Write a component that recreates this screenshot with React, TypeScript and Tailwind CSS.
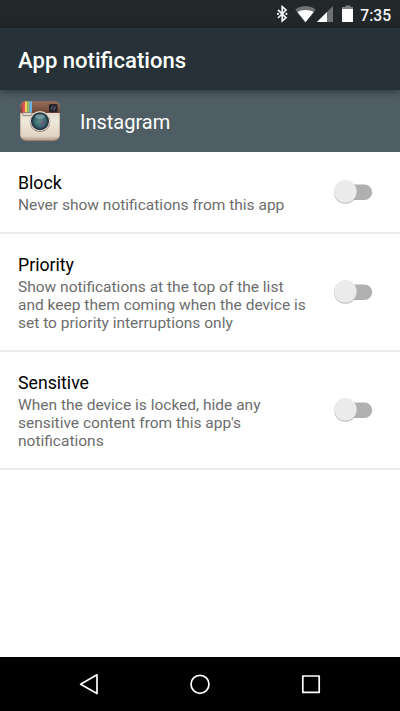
import React from "react";

const settings = [
  {
    title: "Block",
    lines: ["Never show notifications from this app"],
    height: "h-[82px]",
  },
  {
    title: "Priority",
    lines: [
      "Show notifications at the top of the list",
      "and keep them coming when the device is",
      "set to priority interruptions only",
    ],
    height: "h-[118px]",
  },
  {
    title: "Sensitive",
    lines: [
      "When the device is locked, hide any",
      "sensitive content from this app's",
      "notifications",
    ],
    height: "h-[118px]",
  },
];

function StatusBar() {
  return (
    <div className="flex h-7 items-center justify-end bg-[#22272a] pr-[9px]">
      {/* Bluetooth, wifi, signal, battery */}
      <svg width="78" height="28" viewBox="0 0 78 28" className="mr-[6px]">
        <path d="M2 9.8L10 17.8L6.2 21V6.6L10 10L2 18" fill="none" stroke="#f4f6f6" strokeWidth="1.7" />
        <circle cx="2" cy="13.9" r="1.1" fill="#f4f6f6" />
        <circle cx="10.4" cy="13.9" r="1.1" fill="#f4f6f6" />
        <path d="M19.3 9.6C24.8 4.9 34.2 4.9 39.7 9.6L29.5 22.3Z" fill="#6d7173" />
        <path d="M21.3 12.1C25.6 9.4 33.4 9.4 37.7 12.1L29.5 22.3Z" fill="#fff" />
        <path d="M57 6V22H41Z" fill="#6d7173" />
        <path d="M51 12V22H41Z" fill="#fff" />
        <path d="M69.5 5.6H74.5V7H77V10H66V7H69.5Z" fill="#7d8183" />
        <path d="M66 9H77V21.4Q77 22 76.4 22H66.6Q66 22 66 21.4Z" fill="#fff" />
      </svg>
      <span className="pt-[3px] text-[15.6px] leading-7 font-medium text-[#f4f6f6]">7:35</span>
    </div>
  );
}

function InstagramIcon() {
  return (
    <svg width="40" height="40" viewBox="0 0 40 40">
      <defs>
        <clipPath id="iconShape">
          <rect width="40" height="40" rx="6.5" />
        </clipPath>
        <linearGradient id="cream" x1="0" y1="0" x2="0" y2="1">
          <stop offset="0" stopColor="#d2c3b3" />
          <stop offset="0.5" stopColor="#efe8dd" />
          <stop offset="0.88" stopColor="#e0d3c2" />
          <stop offset="1" stopColor="#a8917b" />
        </linearGradient>
        <linearGradient id="leather" x1="0" y1="0" x2="0" y2="1">
          <stop offset="0" stopColor="#96705c" />
          <stop offset="1" stopColor="#6e4433" />
        </linearGradient>
        <radialGradient id="glass">
          <stop offset="0" stopColor="#7b7f8c" />
          <stop offset="0.4" stopColor="#4a7a80" />
          <stop offset="0.8" stopColor="#355a68" />
          <stop offset="1" stopColor="#22323d" />
        </radialGradient>
      </defs>
      <g clipPath="url(#iconShape)">
        <rect width="40" height="40" fill="url(#cream)" />
        <rect width="40" height="12" fill="url(#leather)" />
        <rect x="2.3" width="2.6" height="12" fill="#e0505a" />
        <rect x="4.9" width="2.4" height="12" fill="#f5cf55" />
        <rect x="7.3" width="2.1" height="12" fill="#93c263" />
        <rect x="9.4" width="2.6" height="12" fill="#6cb2e2" />
        <rect x="2.5" y="11.6" width="9.5" height="3" rx="1.4" fill="#e4dcd2" stroke="#746355" strokeWidth="0.7" />
        <rect x="29" y="3" width="8.5" height="8.2" rx="1.5" fill="#242127" />
        <path d="M31.2 8.5L33 4.5" stroke="#3e5960" strokeWidth="1.5" />
        <path d="M33.5 9.5L35.5 5.5" stroke="#64547b" strokeWidth="1.6" />
      </g>
      <rect x="0.5" y="0.5" width="39" height="39" rx="6.2" fill="none" stroke="#765744" strokeOpacity="0.3" />
      <circle cx="20" cy="20.8" r="10.3" fill="#806f61" />
      <circle cx="20" cy="20.2" r="10.1" fill="#e0dcd6" />
      <circle cx="20" cy="20.2" r="9" fill="#283039" />
      <circle cx="20" cy="20.2" r="8.1" fill="url(#glass)" />
      <ellipse cx="20" cy="15.6" rx="4.8" ry="2.4" fill="#a5c5ca" opacity="0.5" />
      <circle cx="17.6" cy="21.6" r="2" fill="#3f8a72" opacity="0.55" />
      <circle cx="22.7" cy="22" r="2" fill="#77526f" opacity="0.6" />
    </svg>
  );
}

function Toggle() {
  return (
    <svg width="42" height="28" viewBox="0 0 42 28" className="shrink-0">
      <rect x="8" y="5.5" width="30.2" height="15.6" rx="7.8" fill="#b0b0b0" />
      <circle cx="11.4" cy="13.6" r="11.5" fill="#000" opacity="0.1" />
      <circle cx="11.4" cy="13.3" r="11.3" fill="#b8b8b8" />
      <circle cx="11.4" cy="12.4" r="11.3" fill="#ebebeb" />
    </svg>
  );
}

function App() {
  return (
    <div className="flex h-[711px] w-[400px] flex-col overflow-hidden bg-white font-[Roboto,sans-serif]">
      <StatusBar />

      {/* Title */}
      <header className="z-10 flex h-[62px] items-center bg-[#263238] pl-[18px] pt-[3px] shadow-[0_2px_7px_rgba(0,0,0,0.4)]">
        <h1 className="text-[22.1px] font-medium text-white">App notifications</h1>
      </header>

      {/* App name */}
      <div className="flex h-[62px] items-center bg-[#4f5d64] pl-5">
        <InstagramIcon />
        <p className="ml-5 mt-0.5 text-[20px] text-white">Instagram</p>
      </div>

      {/* Settings */}
      <main className="flex-1">
        {settings.map((item) => (
          <div
            key={item.title}
            className={`flex items-center justify-between border-b-2 border-[#ebebeb] pl-[18px] pr-6 pt-0.5 ${item.height}`}
          >
            <div>
              <h2 className="text-[17.7px] leading-[22px] text-black">{item.title}</h2>
              <p className="mt-0.5 text-[15.53px] leading-[18.2px] text-[#6d6d6d]">
                {item.lines.map((line) => (
                  <span key={line} className="block whitespace-nowrap">
                    {line}
                  </span>
                ))}
              </p>
            </div>
            <Toggle />
          </div>
        ))}
      </main>

      {/* Navigation */}
      <nav className="flex h-[54px] items-center justify-between bg-black px-[77px]">
        <svg width="24" height="24" viewBox="0 0 24 24" fill="none" stroke="#fff" strokeWidth="1.7" strokeLinejoin="round">
          <path d="M20 2.8V21.6L3.6 12.2Z" />
        </svg>
        <svg width="24" height="24" viewBox="0 0 24 24" fill="none" stroke="#fff" strokeWidth="1.7">
          <circle cx="12" cy="12.3" r="9" />
        </svg>
        <svg width="24" height="24" viewBox="0 0 24 24" fill="none" stroke="#fff" strokeWidth="1.7" strokeLinejoin="round">
          <rect x="3.8" y="4" width="16.4" height="16.4" />
        </svg>
      </nav>
    </div>
  );
}

export default App;
